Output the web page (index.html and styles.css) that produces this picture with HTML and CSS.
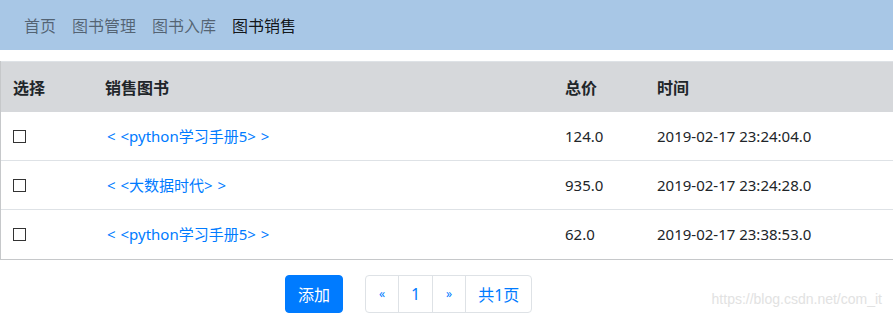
FILE: index.html
```html
<!DOCTYPE html>
<html lang="zh">
<head>
<meta charset="utf-8">
<link rel="stylesheet" href="styles.css">
</head>
<body>
<nav class="navbar">
  <a class="nav-link">首页</a>
  <a class="nav-link">图书管理</a>
  <a class="nav-link">图书入库</a>
  <a class="nav-link active">图书销售</a>
</nav>
<div class="table-wrap">
<table class="table">
  <thead>
    <tr><th class="c1">选择</th><th class="c2">销售图书</th><th class="c3">总价</th><th class="c4">时间</th></tr>
  </thead>
  <tbody>
    <tr><td><span class="check"></span></td><td><a class="book">&lt; &lt;python学习手册5&gt; &gt;</a></td><td>124.0</td><td>2019-02-17 23:24:04.0</td></tr>
    <tr><td><span class="check"></span></td><td><a class="book">&lt; &lt;大数据时代&gt; &gt;</a></td><td>935.0</td><td>2019-02-17 23:24:28.0</td></tr>
    <tr><td><span class="check"></span></td><td><a class="book">&lt; &lt;python学习手册5&gt; &gt;</a></td><td>62.0</td><td>2019-02-17 23:38:53.0</td></tr>
  </tbody>
</table>
</div>
<div class="actions">
  <button class="btn">添加</button>
  <ul class="pagination">
    <li class="page-link small">«</li>
    <li class="page-link">1</li>
    <li class="page-link small">»</li>
    <li class="page-link">共1页</li>
  </ul>
</div>
<div class="watermark">https://blog.csdn.net/com_it</div>
</body>
</html>
```
FILE: styles.css
```css
html, body {
  margin: 0;
  padding: 0;
  background: #fff;
  overflow: hidden;
}
body {
  font-family: "Noto Sans", "Noto Sans CJK SC", sans-serif;
  font-size: 15px;
  color: #212529;
  width: 893px;
  height: 316px;
  position: relative;
}
.navbar {
  display: flex;
  align-items: center;
  height: 50px;
  background: #a8c7e6;
  padding-left: 16px;
  gap: 0;
}
.nav-link {
  font-family: "Noto Sans CJK SC", sans-serif;
  font-size: 16px;
  padding: 0 8px;
  color: rgba(0, 0, 0, 0.5);
  line-height: 24px;
}
.nav-link.active {
  color: rgba(0, 0, 0, 0.9);
}
.table-wrap {
  margin-top: 11px;
  border-left: 1px solid #c6c8ca;
  border-bottom: 1px solid #c6c8ca;
}
.table {
  width: 100%;
  border-collapse: collapse;
}
.table th {
  font-family: "Noto Sans CJK SC", sans-serif;
  font-weight: 700;
  font-size: 16px;
  text-align: left;
  background: #d6d8db;
  border-top: 1px solid #dee2e6;
  height: 50px;
  padding: 0 12px;
  box-sizing: border-box;
  line-height: 24px;
}
.table td {
  height: 49px;
  padding: 0 12px;
  line-height: 24px;
  border-top: 1px solid #dee2e6;
  box-sizing: border-box;
}
.table tbody tr:first-child td {
  border-top: 1px solid #d6d8db;
}
.c1 { width: 92px; }
.c2 { width: 460px; }
.c3 { width: 92px; }
.check {
  display: inline-block;
  width: 11px;
  height: 11px;
  border: 1px solid #333;
  vertical-align: middle;
  margin-top: -3px;
}
.book {
  color: #007bff;
  font-family: "Noto Sans", "Noto Sans CJK SC", sans-serif;
  word-spacing: 1px;
  margin-left: 2px;
}
.actions {
  display: flex;
  align-items: center;
  padding-left: 285px;
  margin-top: 15px;
  gap: 22px;
}
.btn {
  font-family: "Noto Sans CJK SC", sans-serif;
  font-size: 16px;
  background: #007bff;
  color: #fff;
  border: 1px solid #007bff;
  border-radius: 4px;
  height: 38px;
  width: 58px;
  padding: 0;
  line-height: 24px;
}
.pagination {
  display: flex;
  list-style: none;
  margin: 0;
  padding: 0;
}
.page-link {
  font-family: "Noto Sans", "Noto Sans CJK SC", sans-serif;
  font-size: 16px;
  color: #007bff;
  border: 1px solid #dee2e6;
  margin-left: -1px;
  height: 38px;
  box-sizing: border-box;
  padding: 0 12px;
  display: flex;
  align-items: center;
  justify-content: center;
  min-width: 34px;
}
.page-link.small {
  font-size: 12px;
}
.page-link:first-child {
  margin-left: 0;
  border-radius: 4px 0 0 4px;
}
.page-link:last-child {
  border-radius: 0 4px 4px 0;
}
.watermark {
  position: absolute;
  right: 11px;
  bottom: 9px;
  font-family: "Liberation Sans", Arial, sans-serif;
  font-size: 14px;
  color: #e2e2e2;
}
```
